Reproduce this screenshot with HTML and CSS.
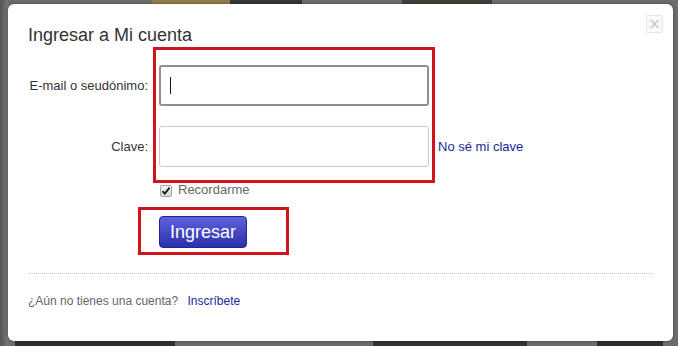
FILE: index.html
```html
<!DOCTYPE html>
<html lang="es">
<head>
    <meta charset="UTF-8">
    <meta name="viewport" content="width=device-width, initial-scale=1.0">
    <title>Ingresar a Mi cuenta</title>
    <link rel="stylesheet" href="styles.css">
</head>
<body>
    <div class="modal">
        <button class="close" type="button" aria-label="Cerrar">&times;</button>

        <h1>Ingresar a Mi cuenta</h1>

        <form class="login-form">
            <div class="field">
                <label for="user">E-mail o seudónimo:</label>
                <div class="input-wrap">
                    <input type="text" id="user" name="user" class="focused">
                    <span class="caret"></span>
                </div>
            </div>
            <div class="field field-pass">
                <label for="pass">Clave:</label>
                <input type="password" id="pass" name="pass">
                <a href="#" class="link forgot">No sé mi clave</a>
            </div>
            <div class="remember">
                <span class="check">
                    <svg width="10" height="10" viewBox="0 0 10 10">
                        <path d="M1.5 5.2 L3.8 7.6 L8.6 1.6" fill="none" stroke="#1a1a1a" stroke-width="1.9"/>
                    </svg>
                </span>
                <span>Recordarme</span>
            </div>
            <div class="actions">
                <button type="submit" class="submit">Ingresar</button>
            </div>
        </form>

        <div class="divider"></div>

        <div class="signup">
            <span>¿Aún no tienes una cuenta?</span>
            <a href="#" class="link">Inscríbete</a>
        </div>

        <!-- highlight boxes drawn over the form -->
        <div class="highlight highlight-fields"></div>
        <div class="highlight highlight-button"></div>
    </div>
</body>
</html>
```

FILE: styles.css
```css
body {
    margin: 0;
    height: 346px;
    overflow: hidden;
    font-family: 'Liberation Sans', Arial, sans-serif;
    background:
        linear-gradient(#8f7c48, #8f7c48) 152px 0 / 78px 4px no-repeat,
        linear-gradient(#353535, #353535) 230px 0 / 72px 4px no-repeat,
        linear-gradient(#404039, #404039) 402px 0 / 90px 4px no-repeat,
        linear-gradient(#303030, #303030) 15px 341px / 160px 5px no-repeat,
        linear-gradient(#333333, #333333) 373px 341px / 154px 5px no-repeat,
        linear-gradient(#2e2e2e, #2e2e2e) 597px 341px / 66px 5px no-repeat,
        linear-gradient(to right, #555555, #777777 8px, #6c6c6c 9px);
    background-color: #6c6c6c;
}

.modal {
    position: relative;
    width: 665px;
    height: 337px;
    margin: 4px 0 0 8px;
    padding: 20px 20px 0 20px;
    box-sizing: border-box;
    background-color: #ffffff;
    border-radius: 6px;
    box-shadow: 0 0 3px rgba(0, 0, 0, 0.4);
}

.close {
    position: absolute;
    top: 11px;
    left: 638px;
    width: 17px;
    height: 18px;
    padding: 0;
    border: 1px solid #e6e6e6;
    border-radius: 2px;
    background-color: #f9f9f9;
    color: #c4c4c4;
    font-family: 'DejaVu Sans', sans-serif;
    font-size: 15px;
    line-height: 15px;
}

h1 {
    margin: 0 0 19px 0;
    font-size: 18px;
    line-height: 22px;
    font-weight: normal;
    color: #333333;
}

.field {
    display: flex;
    align-items: center;
    height: 41px;
}

.field-pass {
    margin-top: 20px;
}

label {
    width: 120px;
    margin-right: 11px;
    text-align: right;
    font-size: 13px;
    color: #333333;
}

.input-wrap {
    position: relative;
}

input {
    width: 270px;
    height: 41px;
    box-sizing: border-box;
    border: 1px solid #cacaca;
    border-radius: 3px;
    background-color: #ffffff;
    outline: none;
    font-family: inherit;
    font-size: 14px;
    padding: 0 10px;
}

input.focused {
    border: 2px solid #8f8f8f;
}

.caret {
    position: absolute;
    left: 11px;
    top: 12px;
    width: 1px;
    height: 17px;
    background-color: #111111;
}

.link {
    color: #25259c;
    text-decoration: none;
}

.forgot {
    margin-left: 9px;
    font-size: 13px;
}

.remember {
    display: flex;
    align-items: center;
    margin-top: 15px;
    padding-left: 132px;
    height: 16px;
    font-size: 13px;
    line-height: 16px;
    color: #666666;
}

.check {
    display: flex;
    align-items: center;
    justify-content: center;
    width: 10px;
    height: 10px;
    margin: 1px 6px 0 0;
    border: 1px solid #a6a6a6;
    border-radius: 2px;
    background: linear-gradient(#f6f6f6, #d6d6d6);
}

.actions {
    margin-top: 18px;
    padding-left: 131px;
    height: 32px;
}

.submit {
    height: 32px;
    padding: 0 10px;
    border: 1px solid #22268f;
    border-radius: 4px;
    background: linear-gradient(#5e62dc, #2c30aa);
    color: #ffffff;
    font-family: inherit;
    font-size: 18px;
    line-height: 30px;
}

.divider {
    margin-top: 25px;
    border-top: 1px dotted #c8c8c8;
}

.signup {
    margin-top: 19px;
    font-size: 12px;
    line-height: 16px;
    color: #666666;
}

.signup .link {
    margin-left: 6px;
}

.highlight {
    position: absolute;
    box-sizing: border-box;
    border: 3px solid #d0141c;
    pointer-events: none;
}

.highlight-fields {
    left: 145px;
    top: 43px;
    width: 282px;
    height: 136px;
}

.highlight-button {
    left: 130px;
    top: 203px;
    width: 151px;
    height: 48px;
}
```
